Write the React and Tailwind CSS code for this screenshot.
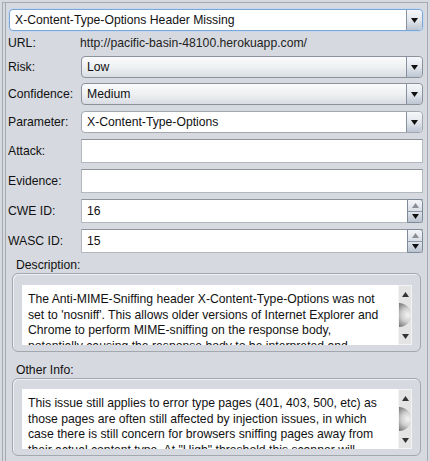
import React from "react";

const Tri = ({ up = false, color = "#111" }) => (
  <svg width="7" height="5" viewBox="0 0 7 5">
    {up ? <polygon points="0,5 7,5 3.5,0" fill={color} /> : <polygon points="0,0 7,0 3.5,5" fill={color} />}
  </svg>
);

const ArrowButton = () => (
  <div className="w-[16px] h-full flex items-center justify-center border-l border-[#8791a0] rounded-r-[4px] bg-linear-to-b from-[#f5f7fa] via-[#e3e7ed] to-[#bcc5d2]">
    <Tri />
  </div>
);

const Combo = ({ value, editable = false, focused = false }) => (
  <div
    className={
      "h-[22px] flex rounded-[4px] overflow-hidden border " +
      (focused
        ? "border-[#7ea6d3] ring-1 ring-[#c4d7ee] bg-white"
        : editable
        ? "border-[#a3a8b0] bg-white"
        : "border-[#8c929b] bg-linear-to-b from-[#fbfbfc] via-[#eef0f2] to-[#d9dde3]")
    }
  >
    <div className="flex-1 pl-[5px] flex items-center whitespace-nowrap">{value}</div>
    <ArrowButton />
  </div>
);

const TextField = ({ value }) => (
  <div className="h-[24px] flex items-center pl-[5px] bg-white border border-[#b3b7be] border-t-[#8e939a]">{value}</div>
);

const Spinner = ({ value }) => (
  <div className="h-[24px] flex bg-white border border-[#b3b7be] border-t-[#8e939a]">
    <div className="flex-1 pl-[5px] flex items-center">{value}</div>
    <div className="w-[16px] flex flex-col border border-[#7f8a99] rounded-r-[4px] overflow-hidden -my-[1px] -mr-[1px]">
      <div className="flex-1 flex items-center justify-center bg-linear-to-b from-[#f3f5f8] to-[#d9dee6] border-b border-[#8f99a7]">
        <Tri up color="#8a8f96" />
      </div>
      <div className="flex-1 flex items-center justify-center bg-linear-to-b from-[#dfe4eb] to-[#b9c2cf]">
        <Tri />
      </div>
    </div>
  </div>
);

const Row = ({ label, children, className = "" }) => (
  <div className={"flex items-center " + className}>
    <div className="w-[75px] pl-[2px] shrink-0">{label}</div>
    <div className="flex-1">{children}</div>
  </div>
);

const ScrollBar = () => (
  <div className="w-[14px] h-full flex flex-col bg-[#e4e4e4] border border-[#f4f4f4]">
    <div className="h-[16px] flex items-center justify-center">
      <Tri up color="#333" />
    </div>
    <div className="flex-1 my-[1px] rounded-r-[12px] bg-[radial-gradient(circle_at_75%_50%,#f4f4f4_0%,#cfcfcf_45%,#6f6f6f_100%)]" />
    <div className="h-[16px] flex items-center justify-center">
      <Tri color="#333" />
    </div>
  </div>
);

const TextPanel = ({ lines, top }) => (
  <div className={"mx-[6px] border border-[#a3a7ae] rounded-[6px] pl-[9px] pr-[8px] pb-[6px] shadow-[inset_1px_1px_0_#eef0f3] " + top}>
    <div className="h-[60px] flex">
      <div className="flex-1 bg-white overflow-hidden pl-[6px] pt-[7px] leading-[15.5px] text-[#111]">
        {lines.map((l, i) => (
          <div key={i} className="whitespace-nowrap">{l}</div>
        ))}
      </div>
      <ScrollBar />
    </div>
  </div>
);

export default function App() {
  return (
    <div className="w-[430px] h-[461px] overflow-hidden bg-[#d6d9df] pt-[2px] pl-[2px] text-[12.2px] text-[#111] [font-family:'Liberation_Sans',Arial,sans-serif]">
      <div className="w-[426px] h-[470px] border-t border-l border-r border-[#a5a9b1]">
        <div className="ml-[2px] h-full border-l border-[#a5a9b1] pr-[4px] flex flex-col">
          <div className="ml-[3px] mt-[6px]">
            <Combo value="X-Content-Type-Options Header Missing" focused />
          </div>
          <div className="h-[24px] flex items-center">
            <div className="w-[74px] pl-[2px]">URL:</div>
            <div className="text-[#222]">http://pacific-basin-48100.herokuapp.com/</div>
          </div>
          <Row label="Risk:" className="mt-[1px]">
            <Combo value="Low" />
          </Row>
          <Row label="Confidence:" className="mt-[5px]">
            <Combo value="Medium" />
          </Row>
          <Row label="Parameter:" className="mt-[6px]">
            <Combo value="X-Content-Type-Options" editable />
          </Row>
          <Row label="Attack:" className="mt-[6px]">
            <TextField value="" />
          </Row>
          <Row label="Evidence:" className="mt-[6px]">
            <TextField value="" />
          </Row>
          <Row label="CWE ID:" className="mt-[6px]">
            <Spinner value="16" />
          </Row>
          <Row label="WASC ID:" className="mt-[6px]">
            <Spinner value="15" />
          </Row>
          <div className="mt-[4px] h-[16px] leading-[16px] pl-[10px]">Description:</div>
          <div className="-mr-[4px]">
            <TextPanel
              top="pt-[11px]"
              lines={[
                "The Anti-MIME-Sniffing header X-Content-Type-Options was not",
                "set to 'nosniff'. This allows older versions of Internet Explorer and",
                "Chrome to perform MIME-sniffing on the response body,",
                "potentially causing the response body to be interpreted and",
              ]}
            />
          </div>
          <div className="mt-[10px] h-[16px] leading-[16px] pl-[10px]">Other Info:</div>
          <div className="-mr-[4px]">
            <TextPanel
              top="pt-[10px]"
              lines={[
                "This issue still applies to error type pages (401, 403, 500, etc) as",
                "those pages are often still affected by injection issues, in which",
                "case there is still concern for browsers sniffing pages away from",
                "their actual content type. At \"High\" threshold this scanner will",
              ]}
            />
          </div>
        </div>
      </div>
    </div>
  );
}
